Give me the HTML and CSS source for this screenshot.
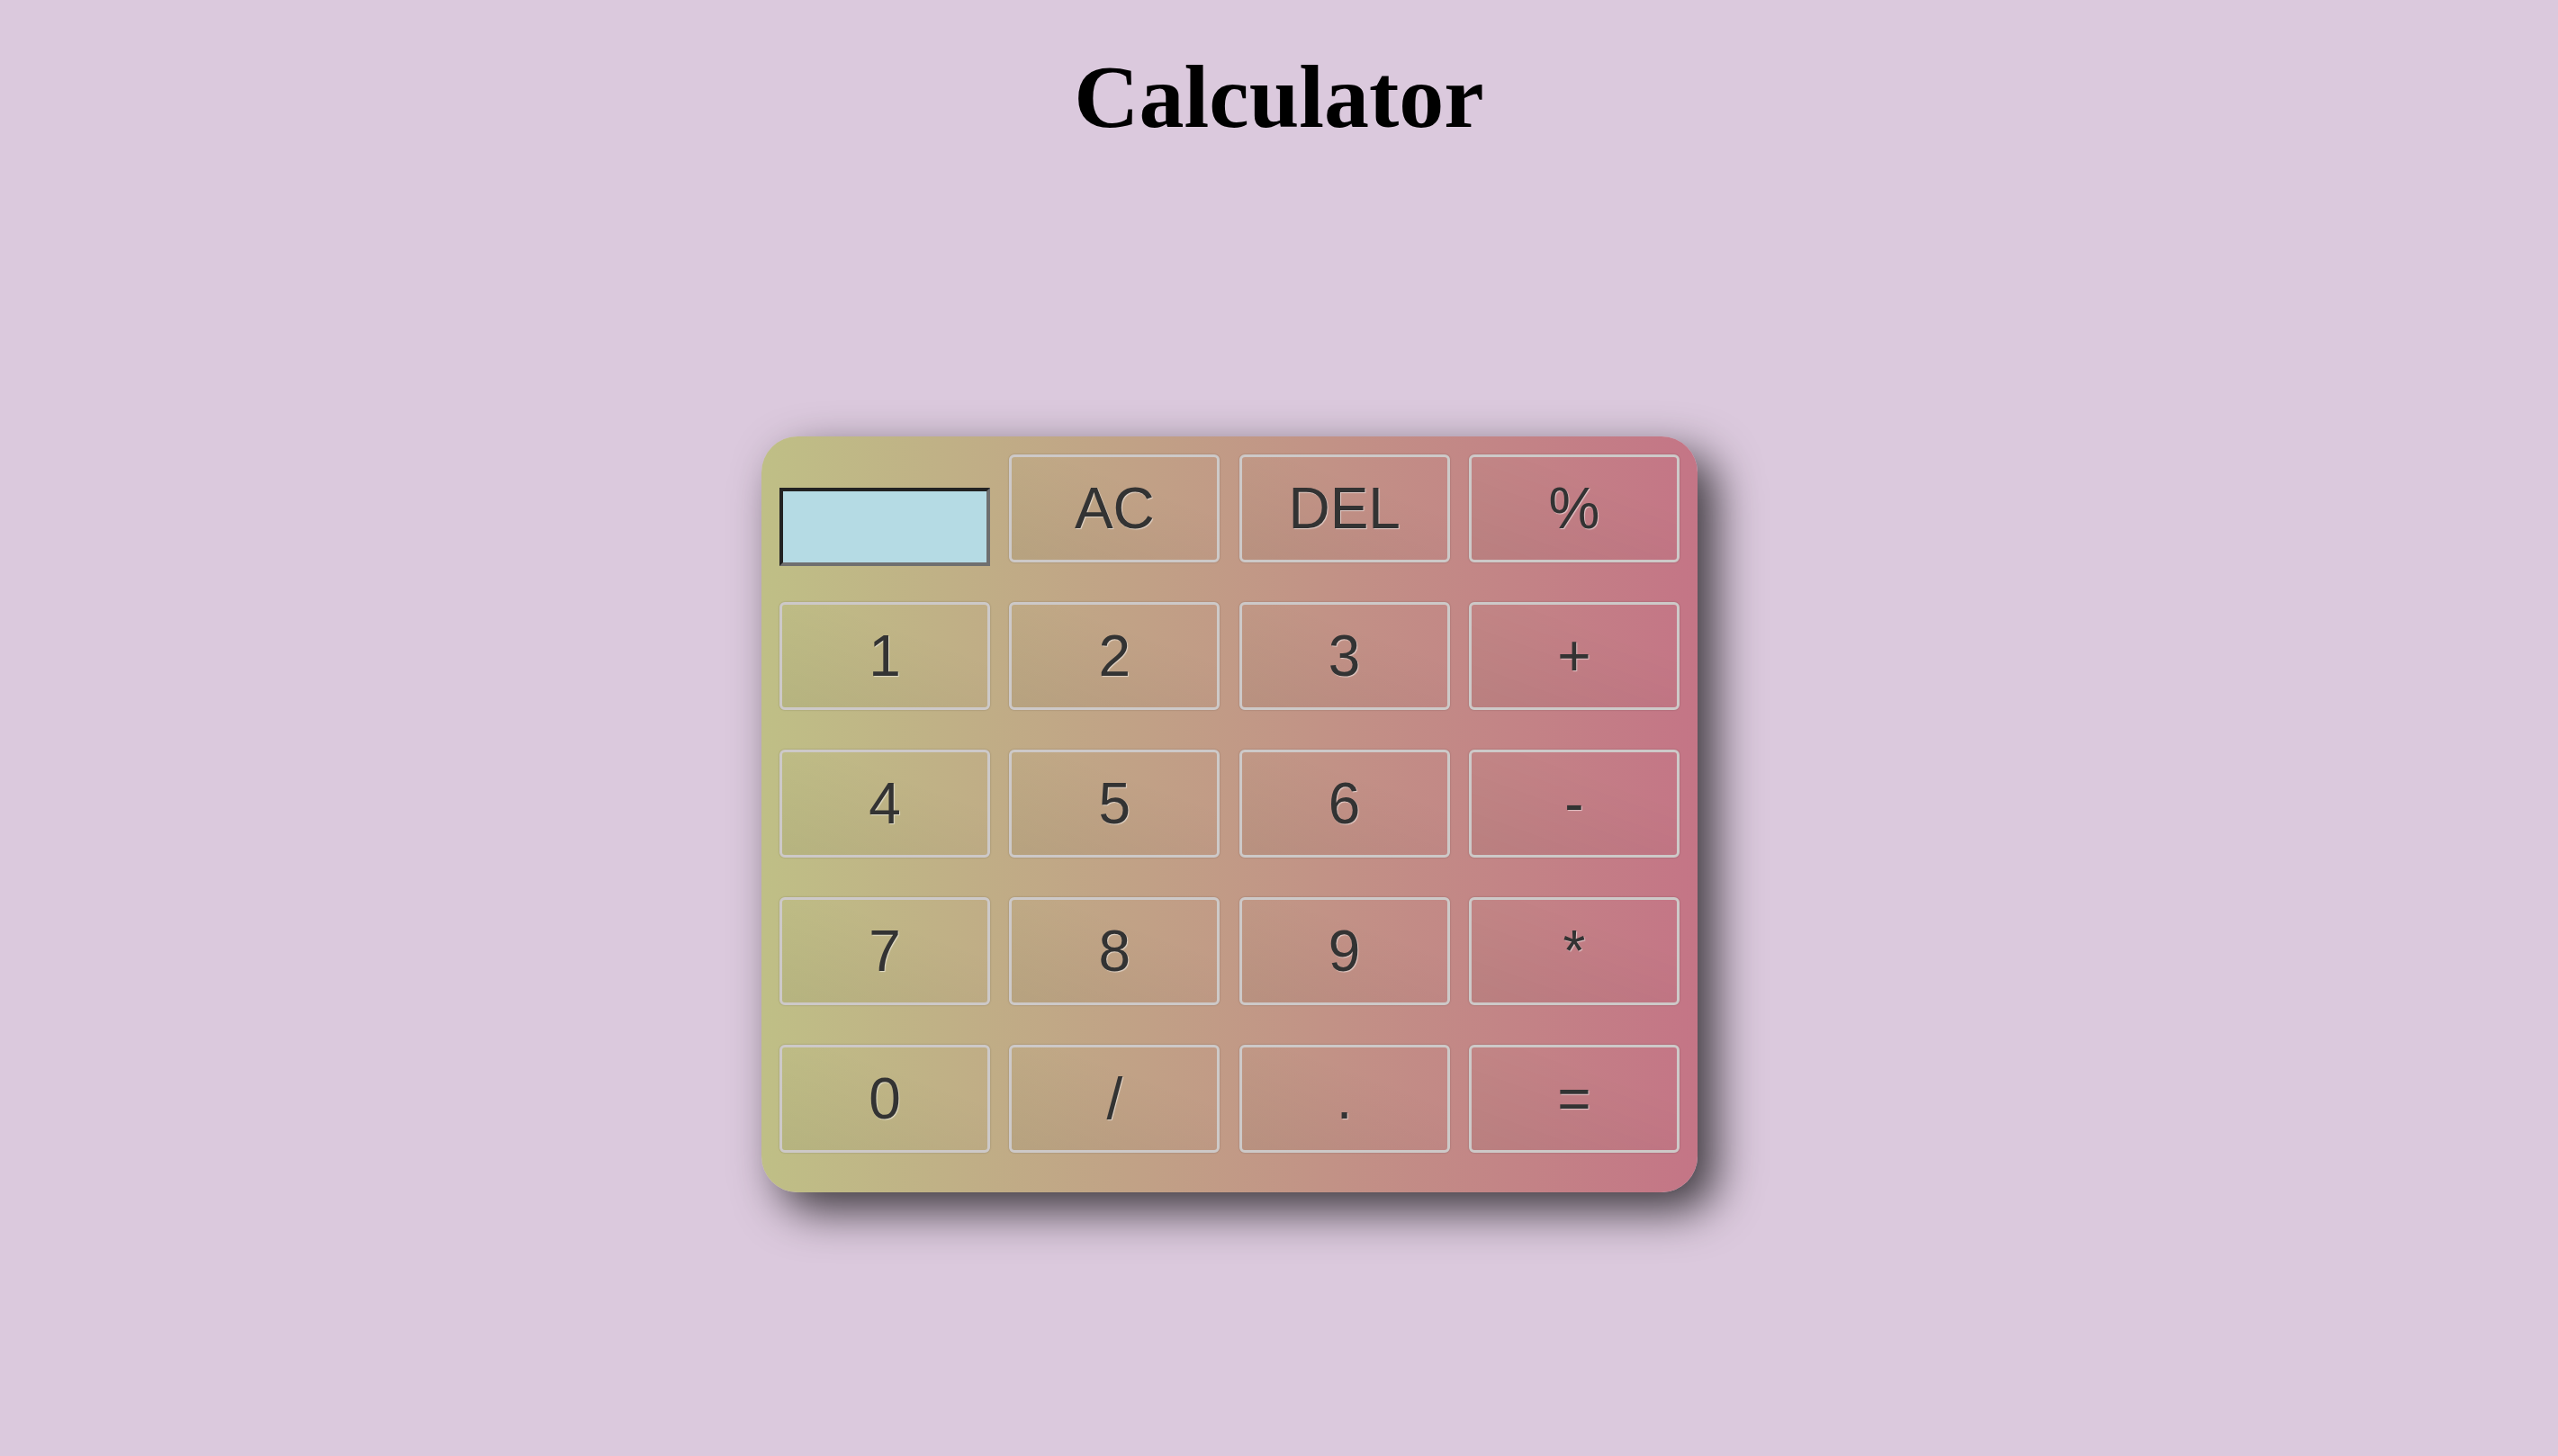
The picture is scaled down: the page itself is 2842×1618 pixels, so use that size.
FILE: index.html
```html
<!DOCTYPE html>
<html lang="en">
<head>
<meta charset="utf-8">
<title>Calculator</title>
<link rel="stylesheet" href="styles.css">
</head>
<body>
<h1 class="title">Calculator</h1>
<div class="calculator">
  <input class="screen" type="text" aria-label="display">
  <button class="key">AC</button>
  <button class="key">DEL</button>
  <button class="key">%</button>
  <button class="key">1</button>
  <button class="key">2</button>
  <button class="key">3</button>
  <button class="key">+</button>
  <button class="key">4</button>
  <button class="key">5</button>
  <button class="key">6</button>
  <button class="key">-</button>
  <button class="key">7</button>
  <button class="key">8</button>
  <button class="key">9</button>
  <button class="key">*</button>
  <button class="key">0</button>
  <button class="key">/</button>
  <button class="key">.</button>
  <button class="key">=</button>
</div>
</body>
</html>
```
FILE: styles.css
```css
html, body {
  margin: 0;
  padding: 0;
}
body {
  background: #dbc9dd;
  min-height: 1618px;
  overflow: hidden;
}
.title {
  margin: 52px 0 0;
  font-family: "Liberation Serif", "Times New Roman", serif;
  font-weight: bold;
  font-size: 100px;
  line-height: 111px;
  text-align: center;
  color: #000;
}
.calculator {
  box-sizing: border-box;
  width: 1040px;
  height: 840px;
  margin: 322px 0 0 846px;
  padding: 20px 20px 44px;
  display: grid;
  grid-template-columns: repeat(4, 1fr);
  grid-auto-rows: 120px;
  column-gap: 21.33px;
  row-gap: 44px;
  border-radius: 40px;
  background: linear-gradient(to right, #bfbf86, #c47586);
  box-shadow: 20px 20px 50px rgba(0, 0, 0, 0.72);
}
.screen {
  box-sizing: border-box;
  align-self: start;
  width: 100%;
  height: 87px;
  margin: 37px 0 0;
  padding: 0;
  border-style: solid;
  border-width: 4px;
  border-color: #222 #6f6f6f #6f6f6f #222;
  background: #b5dbe4;
  outline: none;
}
.key {
  box-sizing: border-box;
  margin: 0;
  padding: 0;
  width: 100%;
  height: 120px;
  border: 3px solid #cdc9c8;
  border-radius: 6px;
  background: linear-gradient(200deg, rgba(0, 0, 0, 0) 30%, rgba(0, 0, 0, 0.05));
  box-shadow: 0 0 2px rgba(0, 0, 0, 0.25);
  font-family: "Liberation Sans", Arial, sans-serif;
  font-size: 64px;
  color: #333;
  text-shadow: 1px 1px 1px rgba(255, 255, 255, 0.55);
  cursor: pointer;
}
```
